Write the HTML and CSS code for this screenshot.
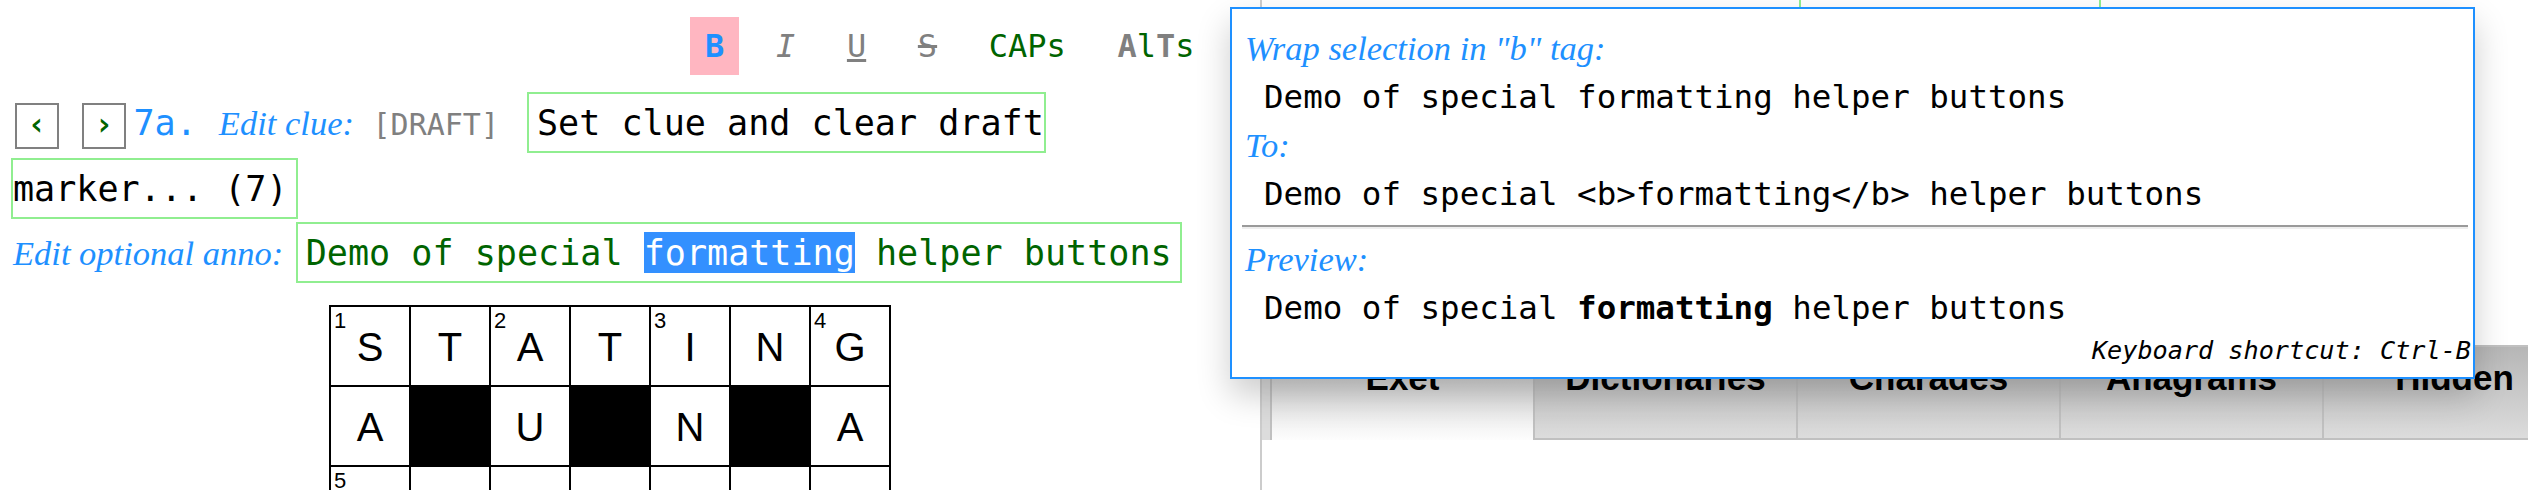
FILE: index.html
```html
<!DOCTYPE html>
<html>
<head>
<meta charset="utf-8">
<title>Exet clue editor</title>
<link rel="stylesheet" href="styles.css">
</head>
<body>
<div class="app">
  <div class="left">
    <div class="toolbar">
      <span class="tb tb-b">B</span>
      <span class="tb tb-i">I</span>
      <span class="tb tb-u">U</span>
      <span class="tb tb-s">S</span>
      <span class="tb tb-caps">CAPs</span>
      <span class="tb tb-alts"><span class="g">A</span><span class="d">l</span><span class="g">T</span><span class="d">s</span></span>
    </div>
    <div class="clue"><span class="nav nav-prev">&lsaquo;</span><span class="nav nav-next">&rsaquo;</span><span class="cnum">7a.</span><span class="lbl lbl-clue">Edit clue:</span><span class="draft">[DRAFT]</span><span class="edit edit-clue">Set clue and clear draft marker... (7)</span></div>
    <div class="anno"><span class="lbl">Edit optional anno:</span><span class="edit edit-anno">Demo of special <span class="sel">formatting</span> helper buttons</span></div>
    <div class="grid">
      <div class="cell"><span class="num">1</span>S</div>
      <div class="cell">T</div>
      <div class="cell"><span class="num">2</span>A</div>
      <div class="cell">T</div>
      <div class="cell"><span class="num">3</span>I</div>
      <div class="cell">N</div>
      <div class="cell"><span class="num">4</span>G</div>
      <div class="cell">A</div>
      <div class="cell blk"></div>
      <div class="cell">U</div>
      <div class="cell blk"></div>
      <div class="cell">N</div>
      <div class="cell blk"></div>
      <div class="cell">A</div>
      <div class="cell"><span class="num">5</span></div>
      <div class="cell"></div>
      <div class="cell"></div>
      <div class="cell"></div>
      <div class="cell"></div>
      <div class="cell"></div>
      <div class="cell"></div>
    </div>
  </div>
  <div class="right">
    <div class="strip"><div class="gbox"></div></div>
    <div class="tabs">
      <div class="tab active">Exet</div>
      <div class="tab">Dictionaries</div>
      <div class="tab">Charades</div>
      <div class="tab">Anagrams</div>
      <div class="tab">Hidden</div>
    </div>
    <div class="pane"></div>
  </div>
  <div class="popup">
    <div class="plabel">Wrap selection in "b" tag:</div>
    <div class="pcode">Demo of special formatting helper buttons</div>
    <div class="plabel">To:</div>
    <div class="pcode">Demo of special &lt;b&gt;formatting&lt;/b&gt; helper buttons</div>
    <hr class="psep">
    <div class="plabel">Preview:</div>
    <div class="pcode">Demo of special <b>formatting</b> helper buttons</div>
    <div class="pkbd">Keyboard shortcut: Ctrl-B</div>
  </div>
</div>
</body>
</html>
```
FILE: styles.css
```css
* { box-sizing: border-box; }
html, body { margin: 0; padding: 0; }
body {
  width: 2528px;
  height: 490px;
  overflow: hidden;
  background: #fff;
  font-family: "DejaVu Sans Mono", monospace;
  font-size: 32px;
  color: #000;
}
.app { display: flex; height: 490px; position: relative; overflow: hidden; }
.left { width: 1260px; flex: none; padding: 17px 0 0 13px; }
.right { flex: 1; border-left: 2px solid #ccc; overflow: hidden; }

/* toolbar */
.toolbar { display: flex; gap: 21.7px; margin-left: 677px; height: 58px; }
.tb { padding: 0 15px; line-height: 58px; color: #808080; white-space: pre; }
.tb-b { background: #ffb6c1; color: #1e90ff; font-weight: bold; }
.tb-i { font-style: italic; }
.tb-u { text-decoration: underline; }
.tb-s { text-decoration: line-through; }
.tb-caps { color: #006400; }
.tb-alts .g { color: #808080; font-weight: bold; }
.tb-alts .d { color: #006400; }

/* clue line */
.clue { margin-top: 15px; line-height: 66px; width: 1200px; font-size: 35.1px; }
.nav {
  display: inline-block;
  width: 44px; height: 46px;
  border: 2px solid #808080;
  font-size: 32px;
  line-height: 38px;
  text-align: center;
  color: #006400;
  font-weight: bold;
  vertical-align: baseline;
}
.nav-prev { margin-left: 2px; }
.nav-next { margin-left: 23px; }
.cnum { margin-left: 7.5px; color: #1e90ff; }
.lbl { font-family: "Liberation Serif", serif; font-style: italic; font-size: 34.5px; line-height: 1; color: #1e90ff; }
.lbl-clue { margin-left: 22px; }
.draft { margin-left: 18.6px; color: #808080; font-size: 30px; line-height: 1; }
.edit {
  outline: 2px solid #90ee90;
  padding: 8px;
}
.edit-clue { margin-left: 30px; }
.anno { line-height: 62px; font-size: 35.1px; }
.edit-anno { margin-left: 14.5px; color: #006400; }
.sel { background: #3390ff; color: #fff; }

/* grid */
.grid {
  margin: 21px 0 0 316px;
  display: grid;
  grid-template-columns: repeat(7, 78px);
  grid-auto-rows: 78px;
  gap: 2px;
  padding: 2px;
  background: #000;
  width: max-content;
}
.cell {
  background: #fff;
  position: relative;
  font-family: "Liberation Sans", Arial, sans-serif;
  font-size: 40px;
  line-height: 80px;
  text-align: center;
}
.cell.blk { background: #000; }
.num { position: absolute; top: 3px; left: 3px; font-size: 22px; line-height: 22px; }

/* right panel */
.strip { height: 345px; }
.gbox { margin-left: 537px; width: 302px; height: 40px; border: 2px solid #90ee90; border-top: none; }
.tabs { display: flex; height: 95px; padding-left: 8px; background: #dcdcdc; }
.tab {
  flex: none;
  width: 263px;
  border: 2px solid #c0c0c0;
  border-right: none;
  background: linear-gradient(#b6b6b6, #dcdcdc);
  font-family: "Liberation Sans", Arial, sans-serif;
  font-weight: bold;
  font-size: 35px;
  text-align: center;
  padding-top: 11px;
}
.tab.active { background: linear-gradient(#c4c4c4, #fdfdfd); border-bottom: none; }
.pane { height: 60px; }

/* popup */
.popup {
  position: absolute;
  left: 1230px;
  top: 7px;
  width: 1245px;
  height: 372px;
  border: 2px solid #1e90ff;
  background: #fff;
  box-shadow: 0 16px 32px rgba(0, 0, 0, 0.2);
  padding: 15px 12px 0 13px;
}
.plabel { font-family: "Liberation Serif", serif; font-style: italic; font-size: 34.5px; line-height: 48.7px; color: #1e90ff; }
.pcode { line-height: 48.7px; padding-left: 19px; white-space: pre; font-size: 32.5px; }
.psep { margin: 6px -7px 6px -3px; border: none; border-top: 2px solid #9a9a9a; border-bottom: 2px solid #eee; height: 0; }
.pkbd { margin: 4px -10px 0 0; text-align: right; font-style: italic; font-size: 25.2px; }
```
